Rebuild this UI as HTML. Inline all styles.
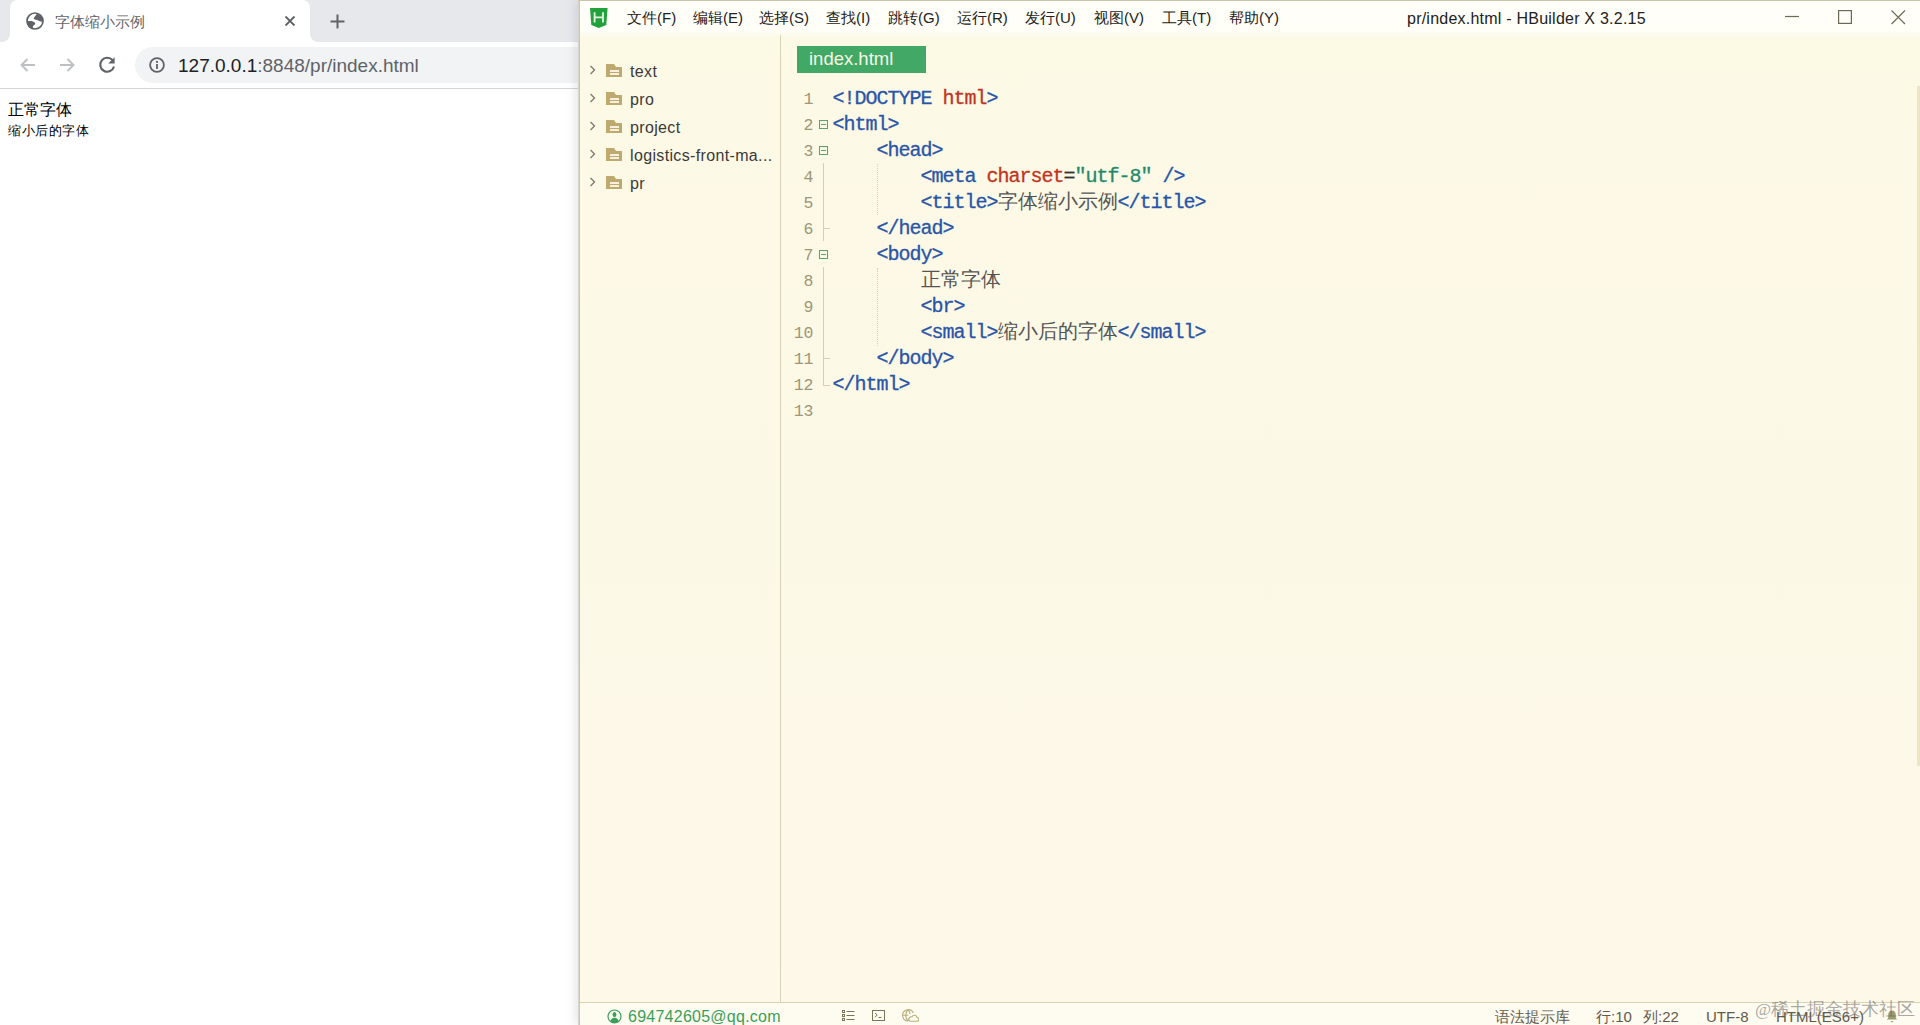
<!DOCTYPE html>
<html><head><meta charset="utf-8"><title>HBuilder</title>
<style>
*{margin:0;padding:0;box-sizing:border-box}
html,body{width:1920px;height:1025px;overflow:hidden;background:#fff;font-family:"Liberation Sans",sans-serif}
.abs{position:absolute}
#browser{position:absolute;left:0;top:0;width:580px;height:1025px;background:#fff;overflow:hidden}
#tabstrip{position:absolute;left:0;top:0;width:580px;height:42px;background:#e7e8ec}
#tab{position:absolute;left:10px;top:0;width:300px;height:43px;background:#fff;border-radius:8px 8px 0 0}
#toolbar{position:absolute;left:0;top:42px;width:580px;height:47px;background:#fff;border-bottom:1px solid #d5d5d5}
#omni{position:absolute;left:135px;top:47px;width:600px;height:36px;background:#f1f3f4;border-radius:18px}
#hb{position:absolute;left:578px;top:0;width:1342px;height:1025px;background:linear-gradient(#fcf9e5,#fdf8e8);box-shadow:-3px 0 9px rgba(70,70,100,0.13)}
#titlebar{position:absolute;left:0;top:0;width:100%;height:38px;background:linear-gradient(#fffefa 0,#fffef7 82%,#fcf9e6 100%)}
#side{position:absolute;left:0;top:38px;width:202px;height:964px;background:transparent}
#divider{position:absolute;left:202px;top:35px;width:1px;height:967px;background:#d8d2b6}
#status{position:absolute;left:0;top:1002px;width:100%;height:23px;background:#fefbf0;border-top:1px solid #d9d3b4}
.side{position:absolute;left:52px;font-size:16px;color:#3a3a3a;letter-spacing:0.35px;white-space:nowrap;line-height:20px}
#edtab{position:absolute;left:219px;top:46px;width:129px;height:27px;background:#42a865;color:#f4f9e6;font-size:18.5px;line-height:26px;padding-left:12px}
.st{position:absolute;top:1007px;font-size:15px;color:#5e5a4c;white-space:nowrap;line-height:20px}
.menu{position:absolute;top:9px;font-size:15px;color:#222;white-space:nowrap}
.code{position:absolute;font-family:"Liberation Mono",monospace;font-size:20px;letter-spacing:-1px;white-space:pre;line-height:26px}
.ln{position:absolute;font-family:"Liberation Mono",monospace;font-size:16.5px;color:#9d9677;text-align:right;width:40px;line-height:26px;white-space:pre}
.code span{-webkit-text-stroke:0.3px currentColor}.t{color:#2855a8}.r{color:#c0341d}.g{color:#24886a}.k{color:#333}.code .cj{-webkit-text-stroke:0}.cj{color:#555;font-family:"Liberation Sans",sans-serif;font-size:20px;letter-spacing:0;line-height:0}
</style></head>
<body>
<div id="browser">
  <div id="tabstrip"></div>
  <div class="abs" style="left:2px;top:34px;width:8px;height:8px;background:#fff"></div>
  <div class="abs" style="left:2px;top:26px;width:8px;height:16px;background:#e7e8ec;border-bottom-right-radius:8px"></div>
  <div class="abs" style="left:310px;top:34px;width:8px;height:8px;background:#fff"></div>
  <div class="abs" style="left:310px;top:26px;width:8px;height:16px;background:#e7e8ec;border-bottom-left-radius:8px"></div>
  <div id="tab"></div>
  <div id="toolbar"></div>
  <div id="omni"></div>
  <!-- tab content -->
  <svg class="abs" style="left:24px;top:10px" width="22" height="22" viewBox="0 0 22 22"><circle cx="11" cy="11" r="8" stroke="#5f6368" stroke-width="1.7" fill="#fff"/><path fill="#5f6368" d="M9.6 8.6C10.4 6.8 12 5.2 13.2 3.2L18.6 7.4 19 11.6C17.4 12.2 15.8 11.4 14.3 10.6 12.6 9.9 10.6 10.1 9.6 8.6z"/><path fill="#5f6368" d="M3 11.4C5.6 10.9 8.4 10.9 10.4 12.3 11.6 13.2 11.6 14.6 10.2 15 9 15.4 8.4 16.8 9 19.4L5.6 17.8 3.2 14.6z"/></svg>
  <div class="abs" style="left:55px;top:13px;font-size:15px;color:#5f6368;white-space:nowrap">字体缩小示例</div>
  <svg class="abs" style="left:284px;top:15px" width="12" height="12" viewBox="0 0 12 12"><path d="M1.5 1.5l9 9M10.5 1.5l-9 9" stroke="#5f6368" stroke-width="1.8"/></svg>
  <svg class="abs" style="left:330px;top:14px" width="15" height="15" viewBox="0 0 15 15"><path d="M7.5 0.5v14M0.5 7.5h14" stroke="#5f6368" stroke-width="2"/></svg>
  <!-- nav -->
  <svg class="abs" style="left:19px;top:57px" width="17" height="16" viewBox="0 0 17 16"><path d="M16 8H2.5M8.5 2L2.5 8l6 6" stroke="#bdc1c6" stroke-width="2" fill="none"/></svg>
  <svg class="abs" style="left:59px;top:57px" width="17" height="16" viewBox="0 0 17 16"><path d="M1 8h13.5M8.5 2l6 6-6 6" stroke="#bdc1c6" stroke-width="2" fill="none"/></svg>
  <svg class="abs" style="left:98px;top:56px" width="18" height="18" viewBox="0 0 18 18"><path d="M14.6 4.2A7 7 0 1 0 16 10.5" stroke="#5f6368" stroke-width="2.1" fill="none"/><path d="M16.6 1.2v6.4h-6.4z" fill="#5f6368"/></svg>
  <svg class="abs" style="left:149px;top:57px" width="16" height="16" viewBox="0 0 16 16"><circle cx="8" cy="8" r="6.9" stroke="#5f6368" stroke-width="1.8" fill="none"/><rect x="7.1" y="7" width="1.8" height="5" fill="#5f6368"/><circle cx="8" cy="4.9" r="1.1" fill="#5f6368"/></svg>
  <div class="abs" style="left:178px;top:54.5px;font-size:19px;white-space:nowrap;color:#5f6368"><span style="color:#202124">127.0.0.1</span>:8848/pr/index.html</div>
  <!-- page -->
  <div class="abs" style="left:8px;top:100px;font-size:16px;color:#000;line-height:20px">正常字体</div>
  <div class="abs" style="left:8px;top:122px;font-size:13.4px;letter-spacing:0.55px;color:#000;line-height:18px">缩小后的字体</div>
</div>
<div id="hb">
  <div id="titlebar"></div>
  <div id="side"></div>
  <div id="divider"></div>
  <div id="status"></div>
  <svg class="abs" style="left:12px;top:8px" width="18" height="20" viewBox="0 0 18 20"><path d="M0 0h17.6l-1.3 16.9L8.8 20 1.3 16.9z" fill="#22a23c"/><path d="M4.6 4.2v10.2M13 4.2v10.2M4.6 9.3H13" stroke="#e3f5df" stroke-width="1.8"/></svg>
  <div class="menu" style="left:49px">文件(F)</div><div class="menu" style="left:115px">编辑(E)</div><div class="menu" style="left:181px">选择(S)</div><div class="menu" style="left:248px">查找(I)</div><div class="menu" style="left:310px">跳转(G)</div><div class="menu" style="left:379px">运行(R)</div><div class="menu" style="left:447px">发行(U)</div><div class="menu" style="left:516px">视图(V)</div><div class="menu" style="left:584px">工具(T)</div><div class="menu" style="left:651px">帮助(Y)</div>
  <div class="menu" style="left:829px;font-size:16px;letter-spacing:0.23px;top:9.5px">pr/index.html - HBuilder X 3.2.15</div>
  <svg class="abs" style="left:1206px;top:10px" width="16" height="16" viewBox="0 0 16 16"><path d="M1 6.5h14" stroke="#6b6a55" stroke-width="1.2"/></svg>
  <svg class="abs" style="left:1260px;top:10px" width="16" height="16" viewBox="0 0 16 16"><rect x="0.6" y="0.6" width="12.8" height="12.8" stroke="#6b6a55" stroke-width="1.2" fill="none"/></svg>
  <svg class="abs" style="left:1313px;top:10px" width="16" height="16" viewBox="0 0 16 16"><path d="M0.5 0.5l13.5 13.5M14 0.5L0.5 14" stroke="#6b6a55" stroke-width="1.1"/></svg>
  <svg class="abs" style="left:11px;top:65px" width="8" height="10" viewBox="0 0 8 10"><path d="M1.5 1l4 4-4 4" stroke="#7d7a6c" stroke-width="1.3" fill="none"/></svg>
<svg class="abs" style="left:28px;top:64px" width="16" height="13" viewBox="0 0 16 13"><path d="M0 0h8l2 3h6v10H0z" fill="#bea96e"/><rect x="4" y="6" width="9" height="2" fill="#f6f0dc"/><rect x="4" y="9" width="9" height="2" fill="#f6f0dc"/></svg>
<div class="side" style="top:62px">text</div><svg class="abs" style="left:11px;top:93px" width="8" height="10" viewBox="0 0 8 10"><path d="M1.5 1l4 4-4 4" stroke="#7d7a6c" stroke-width="1.3" fill="none"/></svg>
<svg class="abs" style="left:28px;top:92px" width="16" height="13" viewBox="0 0 16 13"><path d="M0 0h8l2 3h6v10H0z" fill="#bea96e"/><rect x="4" y="6" width="9" height="2" fill="#f6f0dc"/><rect x="4" y="9" width="9" height="2" fill="#f6f0dc"/></svg>
<div class="side" style="top:90px">pro</div><svg class="abs" style="left:11px;top:121px" width="8" height="10" viewBox="0 0 8 10"><path d="M1.5 1l4 4-4 4" stroke="#7d7a6c" stroke-width="1.3" fill="none"/></svg>
<svg class="abs" style="left:28px;top:120px" width="16" height="13" viewBox="0 0 16 13"><path d="M0 0h8l2 3h6v10H0z" fill="#bea96e"/><rect x="4" y="6" width="9" height="2" fill="#f6f0dc"/><rect x="4" y="9" width="9" height="2" fill="#f6f0dc"/></svg>
<div class="side" style="top:118px">project</div><svg class="abs" style="left:11px;top:149px" width="8" height="10" viewBox="0 0 8 10"><path d="M1.5 1l4 4-4 4" stroke="#7d7a6c" stroke-width="1.3" fill="none"/></svg>
<svg class="abs" style="left:28px;top:148px" width="16" height="13" viewBox="0 0 16 13"><path d="M0 0h8l2 3h6v10H0z" fill="#bea96e"/><rect x="4" y="6" width="9" height="2" fill="#f6f0dc"/><rect x="4" y="9" width="9" height="2" fill="#f6f0dc"/></svg>
<div class="side" style="top:146px">logistics-front-ma...</div><svg class="abs" style="left:11px;top:177px" width="8" height="10" viewBox="0 0 8 10"><path d="M1.5 1l4 4-4 4" stroke="#7d7a6c" stroke-width="1.3" fill="none"/></svg>
<svg class="abs" style="left:28px;top:176px" width="16" height="13" viewBox="0 0 16 13"><path d="M0 0h8l2 3h6v10H0z" fill="#bea96e"/><rect x="4" y="6" width="9" height="2" fill="#f6f0dc"/><rect x="4" y="9" width="9" height="2" fill="#f6f0dc"/></svg>
<div class="side" style="top:174px">pr</div>
  <div class="code" style="left:254.5px;top:86px"><span class="t">&lt;!DOCTYPE</span> <span class="r">html</span><span class="t">&gt;</span></div>
<div class="code" style="left:254.5px;top:112px"><span class="t">&lt;html&gt;</span></div>
<div class="code" style="left:254.5px;top:138px">    <span class="t">&lt;head&gt;</span></div>
<div class="code" style="left:254.5px;top:164px">        <span class="t">&lt;meta</span> <span class="r">charset</span><span class="k">=</span><span class="g">"utf-8"</span> <span class="t">/&gt;</span></div>
<div class="code" style="left:254.5px;top:190px">        <span class="t">&lt;title&gt;</span><span class="cj">字体缩小示例</span><span class="t">&lt;/title&gt;</span></div>
<div class="code" style="left:254.5px;top:216px">    <span class="t">&lt;/head&gt;</span></div>
<div class="code" style="left:254.5px;top:242px">    <span class="t">&lt;body&gt;</span></div>
<div class="code" style="left:254.5px;top:268px">        <span class="cj">正常字体</span></div>
<div class="code" style="left:254.5px;top:294px">        <span class="t">&lt;br&gt;</span></div>
<div class="code" style="left:254.5px;top:320px">        <span class="t">&lt;small&gt;</span><span class="cj">缩小后的字体</span><span class="t">&lt;/small&gt;</span></div>
<div class="code" style="left:254.5px;top:346px">    <span class="t">&lt;/body&gt;</span></div>
<div class="code" style="left:254.5px;top:372px"><span class="t">&lt;/html&gt;</span></div>
<div class="code" style="left:254.5px;top:398px"></div>

  <div class="ln" style="left:195.5px;top:87px">1
2
3
4
5
6
7
8
9
10
11
12
13</div>
  <div id="edtab"><span>index.html</span></div>
<svg class="abs" style="left:241px;top:120px" width="9" height="9" viewBox="0 0 9 9"><rect x="0.5" y="0.5" width="8" height="8" fill="none" stroke="#5d9f6e"/><path d="M2 4.5h5" stroke="#5d9f6e"/></svg><svg class="abs" style="left:241px;top:146px" width="9" height="9" viewBox="0 0 9 9"><rect x="0.5" y="0.5" width="8" height="8" fill="none" stroke="#5d9f6e"/><path d="M2 4.5h5" stroke="#5d9f6e"/></svg><svg class="abs" style="left:241px;top:250px" width="9" height="9" viewBox="0 0 9 9"><rect x="0.5" y="0.5" width="8" height="8" fill="none" stroke="#5d9f6e"/><path d="M2 4.5h5" stroke="#5d9f6e"/></svg><div class="abs" style="left:245px;top:163px;width:1px;height:78px;background:#d6cfb5"></div><div class="abs" style="left:245px;top:228px;width:7px;height:1px;background:#d6cfb5"></div><div class="abs" style="left:245px;top:267px;width:1px;height:119px;background:#d6cfb5"></div><div class="abs" style="left:245px;top:358px;width:7px;height:1px;background:#d6cfb5"></div><div class="abs" style="left:245px;top:385px;width:7px;height:1px;background:#d6cfb5"></div><div class="abs" style="left:299px;top:164px;width:0;height:51px;border-left:1px dotted #d6cfb4"></div><div class="abs" style="left:299px;top:268px;width:0;height:78px;border-left:1px dotted #d6cfb4"></div>
  <div class="abs" style="left:1339px;top:86px;width:3px;height:680px;background:#ede6c5"></div>
  <svg class="abs" style="left:29px;top:1008.5px" width="15" height="15" viewBox="0 0 15 15"><circle cx="7.5" cy="7.5" r="6.5" fill="none" stroke="#3a9f5a" stroke-width="1.2"/><ellipse cx="7.5" cy="5.6" rx="1.9" ry="2.5" fill="#3a9f5a"/><path d="M3.2 12.4c.6-2 2-3.2 3.3-3.6h2c1.3.4 2.7 1.6 3.3 3.6A6.5 6.5 0 0 1 3.2 12.4z" fill="#3a9f5a"/></svg>
  <div class="st" style="left:50px;color:#3a9f5a;font-size:16px;top:1006.5px;letter-spacing:0.25px">694742605@qq.com</div>
  <svg class="abs" style="left:264px;top:1010px" width="13" height="12" viewBox="0 0 13 12"><g fill="none" stroke="#7a7558" stroke-width="1"><rect x="0.5" y="0.5" width="2" height="2"/><rect x="0.5" y="4.5" width="2" height="2"/><rect x="0.5" y="8.5" width="2" height="2"/></g><path d="M4.5 1.5h8M4.5 5.5h8M4.5 9.5h8" stroke="#7a7558" stroke-width="1"/></svg>
  <svg class="abs" style="left:294px;top:1010px" width="13" height="11" viewBox="0 0 13 11"><rect x="0.5" y="0.5" width="12" height="10" fill="none" stroke="#7a7558" stroke-width="1"/><path d="M3 3l2.2 2L3 7.2M6.5 7.5h3" stroke="#7a7558" stroke-width="1" fill="none"/></svg>
  <svg class="abs" style="left:324px;top:1009px" width="17" height="13" viewBox="0 0 17 13"><g fill="none" stroke="#b7ae7c" stroke-width="1.1"><path d="M6 11.9A5.6 5.6 0 1 1 11.3 4"/><path d="M0.6 6.2h5.5M6 .6c-1.6 1.8-2.3 3.6-2.3 5.5S4.4 10 6 11.9M6 .6c1.2 1.4 1.9 2.8 2.1 4.2"/><path d="M8.2 12.3h6.6a1.9 1.9 0 0 0 .2-3.8 2.6 2.6 0 0 0-5-.6 2.2 2.2 0 0 0-1.8 4.4z"/></g></svg>
  <div class="st" style="left:917px">语法提示库</div>
  <div class="st" style="left:1018px">行:10</div>
  <div class="st" style="left:1065px">列:22</div>
  <div class="st" style="left:1128px">UTF-8</div>
  <div class="st" style="left:1198px">HTML(ES6+)</div>
  <svg class="abs" style="left:1308px;top:1010px" width="12" height="13" viewBox="0 0 12 13"><path d="M6 0.5c-2.4 0-3.8 1.7-3.8 4.2v3.2L0.8 9.6h10.4L9.8 7.9V4.7C9.8 2.2 8.4.5 6 .5z" fill="#9c9c6c"/><path d="M4.4 11h3.2L6 12.6z" fill="#9c9c6c"/></svg>
  <div class="abs" style="left:1177px;top:996.5px;font-family:'Liberation Serif',serif;font-size:17.5px;color:rgba(95,95,95,0.55);white-space:nowrap;line-height:24px">@稀土掘金技术社区</div>

  <div class="abs" style="left:0;top:0;width:1px;height:1025px;background:#d6d6cc"></div><div class="abs" style="left:1px;top:0;width:1px;height:1025px;background:#c8c9a6"></div>
  <div class="abs" style="left:0;top:0;width:1342px;height:1px;background:#c9c7a8"></div>
</div>
</body></html>
